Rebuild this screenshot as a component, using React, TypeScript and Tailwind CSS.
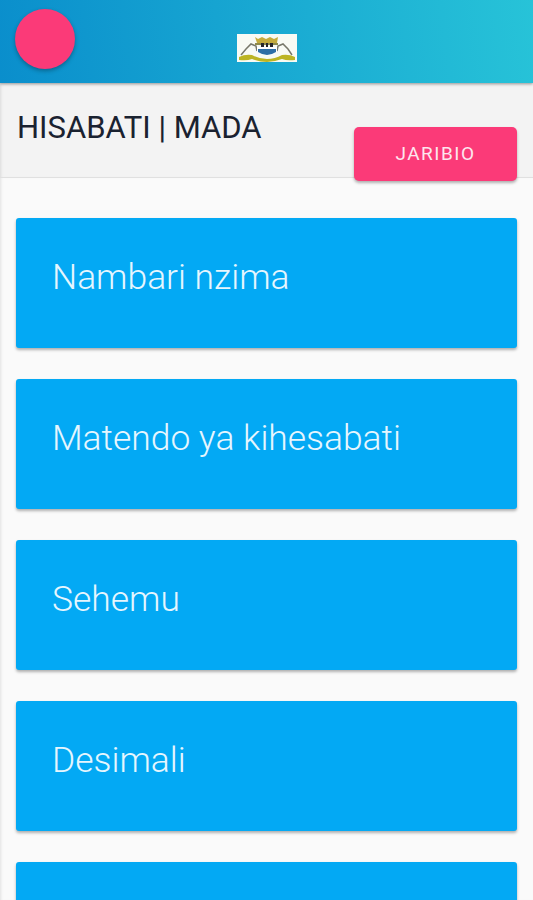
const topics = ["Nambari nzima", "Matendo ya kihesabati", "Sehemu", "Desimali", ""];

const Emblem = () => (
	<svg width="60" height="28" viewBox="0 0 60 28" className="block">
		<rect width="60" height="28" fill="#f8faf4" />
		<path d="M18 3l3 2 4-2 4 2 4-2 4 2 4-2-1 6H20z" fill="#c4ab3c" />
		<path d="M18 9h23v2H18z" fill="#8f8a4a" />
		<path d="M24 9h3v4h-3zM29 9h2v4h-2zM33 9h3v4h-3z" fill="#26262a" />
		<path d="M4 21 L9 15 L14 10 L19 12 L20 17" fill="none" stroke="#77776a" strokeWidth="1.5" />
		<path d="M55 21 L51 15 L46 10 L41 12 L40 17" fill="none" stroke="#77776a" strokeWidth="1.5" />
		<path d="M20 13h20v5q-10 7-20 0z" fill="#fff" />
		<path d="M21 15h18v3q-9 6-18 0z" fill="#2d6ea6" />
		<path d="M2 23q6-3 13-2 7 4 15 4t15-4q7-1 13 2v3q-8 1-13-1-8 3-15 3t-15-3q-5 2-13 1z" fill="#bcb422" />
	</svg>
);

const App = () => {
	return (
		<div className="w-[533px] h-[900px] overflow-hidden bg-[#fafafa] font-['Roboto',sans-serif]">
			<header className="relative z-10 h-[83px] bg-[linear-gradient(82deg,#0a8ecc,#27c3d8)] shadow-[0_1px_3px_rgba(0,0,0,0.4)]">
				<div className="flex items-start h-full pl-[15px] pt-[9px]">
					<div className="w-[60px] h-[60px] rounded-full bg-[#fb3a78] shadow-[0_2px_4px_rgba(0,0,0,0.3)]" />
					<div className="ml-[162px] mt-[25px]">
						<Emblem />
					</div>
				</div>
			</header>

			<div className="relative h-[95px] bg-[#f3f3f3] border-b border-[#e0e0e0] pl-[17px] pt-[27px] shadow-[inset_3px_0_3px_-2px_rgba(0,0,0,0.1)]">
				<h1 className="text-[31px] leading-[36px] font-normal text-[#1a2230]">HISABATI | MADA</h1>
				<button className="absolute left-[354px] top-[44px] w-[163px] h-[54px] rounded-[5px] bg-[#fb3a78] text-[#fde6ee] text-[19px] tracking-[1.5px] shadow-[0_2px_3px_rgba(0,0,0,0.3)]">
					JARIBIO
				</button>
			</div>

			<div className="flex flex-col gap-[31px] px-[16px] pt-[40px] h-[722px] shadow-[inset_3px_0_3px_-2px_rgba(0,0,0,0.1)]">
				{topics.map((topic, i) => (
					<div
						key={i}
						className="h-[130px] shrink-0 rounded-[3px] bg-[#03a9f4] pl-[36px] pt-[39px] text-[35.4px] leading-[40px] font-light text-[#e6f6fe] shadow-[0_2px_3px_rgba(0,0,0,0.3)]">
						{topic}
					</div>
				))}
			</div>
		</div>
	);
};

export default App;
